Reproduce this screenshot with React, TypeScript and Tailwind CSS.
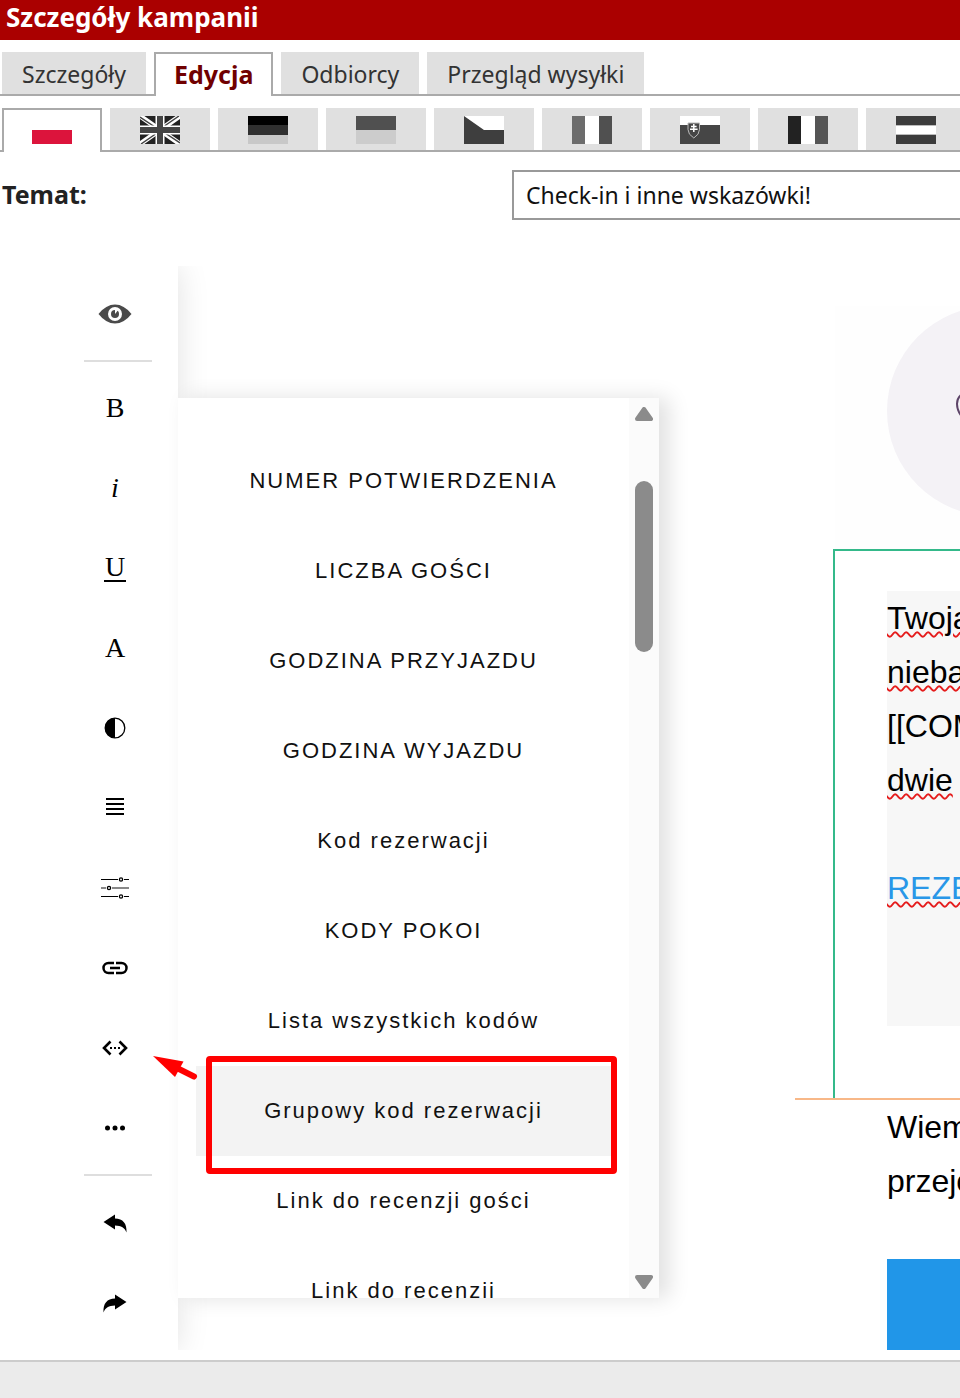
import type { ReactNode } from "react";

type Tool = {
  label: string;
  icon: ReactNode;
};

const tabs = ["Szczegóły", "Edycja", "Odbiorcy", "Przegląd wysyłki"];

const flags: Tool[] = [
  { label: "Polski", icon: <path fill="#dc143c" d="M0 14h40v14H0z" /> },
  {
    label: "English",
    icon: (
      <>
        <path fill="#222" d="M0 0h40v28H0z" />
        <path stroke="#fff" strokeWidth="5" d="M0 0l40 28M40 0L0 28" />
        <path stroke="#444" strokeWidth="1.5" d="M0 1l18 12M22 15l18 12M39 0L23 11M17 17L1 28" />
        <path stroke="#fff" strokeWidth="9" d="M20 0v28M0 14h40" />
        <path stroke="#444" strokeWidth="6" d="M20 0v28M0 14h40" />
      </>
    ),
  },
  {
    label: "Deutsch",
    icon: (
      <>
        <path d="M0 0h40v9H0z" />
        <path fill="#303030" d="M0 9h40v10H0z" />
        <path fill="#c8c8c8" d="M0 19h40v9H0z" />
      </>
    ),
  },
  {
    label: "Українська",
    icon: (
      <>
        <path fill="#505050" d="M0 0h40v14H0z" />
        <path fill="#ccc" d="M0 14h40v14H0z" />
      </>
    ),
  },
  {
    label: "Čeština",
    icon: (
      <>
        <path fill="#fff" d="M0 0h40v14H0z" />
        <path fill="#3e3e3e" d="M0 0l20 14h20v14H0z" />
      </>
    ),
  },
  {
    label: "Italiano",
    icon: (
      <>
        <path fill="#6c6c6c" d="M0 0h13v28H0z" />
        <path fill="#fff" d="M13 0h14v28H13z" />
        <path fill="#505050" d="M27 0h13v28H27z" />
      </>
    ),
  },
  {
    label: "Slovenčina",
    icon: (
      <>
        <path fill="#fff" d="M0 0h40v9H0z" />
        <path fill="#464646" d="M0 9h40v19H0z" />
        <path
          fill="#464646"
          stroke="#bbb"
          d="M8 7h11.5v6.5q0 5-5.7 8.500q-5.8-3.5-5.8-8.500z"
        />
        <path stroke="#fff" strokeWidth="1.5" d="M13.8 8v8M11 10.500h5.600M10 13.200h7.600" />
      </>
    ),
  },
  {
    label: "Français",
    icon: (
      <>
        <path fill="#222" d="M0 0h13v28H0z" />
        <path fill="#fff" d="M13 0h14v28H13z" />
        <path fill="#555" d="M27 0h13v28H27z" />
      </>
    ),
  },
  {
    label: "Nederlands",
    icon: (
      <>
        <path fill="#3c3c3c" d="M0 0h40v28H0z" />
        <path fill="#fff" stroke="#bbb" strokeWidth="1" d="M-1 9.500h42v9h-42z" />
      </>
    ),
  },
];

function Icon({ children }: { children: ReactNode }) {
  return (
    <svg width="36" height="36" viewBox="0 0 36 36" fill="none" aria-hidden="true">
      {children}
    </svg>
  );
}

const tools: Tool[] = [
  { label: "Pogrubienie", icon: "B" },
  { label: "Kursywa", icon: <i>i</i> },
  {
    label: "Podkreślenie",
    icon: <span className="border-b-2 border-black px-px leading-[26px]">U</span>,
  },
  { label: "Czcionka", icon: "A" },
  {
    label: "Kolor",
    icon: (
      <Icon>
        <circle cx="18" cy="18" r="9.8" stroke="#000" strokeWidth="1.3" />
        <path fill="#000" d="M18 8a10 10 0 0 0 0 20z" />
      </Icon>
    ),
  },
  {
    label: "Wyrównanie",
    icon: (
      <Icon>
        <path stroke="#000" strokeWidth="2" d="M9 9h18M9 14h18M9 19h18M9 24h18" />
      </Icon>
    ),
  },
  {
    label: "Ustawienia",
    icon: (
      <Icon>
        <path stroke="#000" d="M4 9.500h17M27 9.500h5M4 26.500h17M27 26.500h5" />
        <path stroke="#888" strokeWidth="2" d="M4 18h5M15 18h17" />
        <g stroke="#000" strokeWidth="1.3">
          <circle cx="24" cy="9.5" r="1.6" />
          <circle cx="12" cy="18" r="1.6" />
          <circle cx="24" cy="26.5" r="1.6" />
        </g>
      </Icon>
    ),
  },
  {
    label: "Odnośnik",
    icon: (
      <Icon>
        <path
          stroke="#000"
          strokeWidth="2.5"
          d="M17 13h-5.500a5 5 0 0 0 0 10H17M19 13h5.500a5 5 0 0 1 0 10H19M13 18h10"
        />
      </Icon>
    ),
  },
  {
    label: "Kody",
    icon: (
      <Icon>
        <path stroke="#000" strokeWidth="2.6" d="M13.500 11.500L7 18l6.500 6.500M22.500 11.500L29 18l-6.500 6.500" />
        <path fill="#000" d="M13 17h2v2h-2zM17 17h2v2h-2zM21 17h2v2h-2z" />
      </Icon>
    ),
  },
  {
    label: "Więcej",
    icon: (
      <Icon>
        <circle cx="10.5" cy="18" r="2.5" fill="#000" />
        <circle cx="18" cy="18" r="2.5" fill="#000" />
        <circle cx="25.5" cy="18" r="2.5" fill="#000" />
      </Icon>
    ),
  },
];

const history: Tool[] = [
  {
    label: "Cofnij",
    icon: (
      <Icon>
        <path fill="#000" d="M6.500 16L18 8.500v4c8 0 12 5 11.500 14c-2-5-5-6.500-11.500-7v4z" />
      </Icon>
    ),
  },
  {
    label: "Ponów",
    icon: (
      <Icon>
        <path fill="#000" d="M29.500 16L18 8.500v4c-8 0-12 5-11.500 14c2-5 5-6.500 11.500-7v4z" />
      </Icon>
    ),
  },
];

const codes = [
  "NUMER POTWIERDZENIA",
  "LICZBA GOŚCI",
  "GODZINA PRZYJAZDU",
  "GODZINA WYJAZDU",
  "Kod rezerwacji",
  "KODY POKOI",
  "Lista wszystkich kodów",
  "Grupowy kod rezerwacji",
  "Link do recenzji gości",
  "Link do recenzii",
];

const activeCode = "Grupowy kod rezerwacji";

function ToolButton({ label, icon }: Tool) {
  return (
    <button
      type="button"
      aria-label={label}
      className="flex h-20 w-full items-center justify-center font-['Liberation_Serif',serif] text-[28px] text-black"
    >
      {icon}
    </button>
  );
}

function Divider() {
  return <hr className="ml-8 w-[68px] border-t-2 border-[#dedede]" />;
}

function Misspelled({ children }: { children: ReactNode }) {
  return (
    <span className="underline decoration-[#e51c1c] decoration-wavy decoration-2 underline-offset-2">
      {children}
    </span>
  );
}

function Toolbar() {
  return (
    <aside className="w-[178px] shrink-0 bg-white pb-[6px] pl-[52px] pt-2 shadow-[0_0_30px_rgba(0,0,0,0.12)]">
      <ToolButton
        label="Podgląd"
        icon={
          <Icon>
            <path fill="#4a4a4a" d="M1.500 18Q9 8.500 18 8.500T34.500 18Q27 27.500 18 27.500T1.500 18z" />
            <circle cx="18" cy="18" r="7" fill="#fff" />
            <circle cx="18" cy="18" r="4" fill="#4a4a4a" />
            <path fill="#fff" d="M18 18v-5h4z" />
          </Icon>
        }
      />
      <div className="py-[6px]">
        <Divider />
      </div>
      {tools.map((tool) => (
        <ToolButton key={tool.label} {...tool} />
      ))}
      <div className="pb-2 pt-[6px]">
        <Divider />
      </div>
      {history.map((tool) => (
        <ToolButton key={tool.label} {...tool} />
      ))}
    </aside>
  );
}

function CodesMenu() {
  return (
    <div className="absolute left-[178px] top-[132px] flex h-[900px] w-[481px] overflow-hidden bg-white">
      <ul className="mx-[18px] flex-1 pt-[38px]">
        {codes.map((code) => (
          <li key={code}>
            <button
              type="button"
              className={`h-[90px] w-full pb-[2px] text-center font-['Liberation_Sans',sans-serif] text-[22px] tracking-[2px] text-[#111] ${
                code === activeCode ? "bg-[#f3f3f3]" : ""
              }`}
            >
              {code}
            </button>
          </li>
        ))}
      </ul>
      <div className="flex w-[30px] flex-col items-center justify-between bg-[#fbfbfb] py-[9px]">
        <svg width="18" height="14" viewBox="0 0 18 14" aria-hidden="true">
          <path fill="#8b8b8b" stroke="#8b8b8b" strokeWidth="4" strokeLinejoin="round" d="M9 2l7 10H2z" />
        </svg>
        <div className="mb-[623px] mt-[60px] w-[18px] flex-1 rounded-full bg-[#8b8b8b]" />
        <svg width="18" height="14" viewBox="0 0 18 14" aria-hidden="true">
          <path fill="#8b8b8b" stroke="#8b8b8b" strokeWidth="4" strokeLinejoin="round" d="M9 12l7-10H2z" />
        </svg>
      </div>
    </div>
  );
}

function EmailPreview() {
  return (
    <div className="min-w-0 flex-1 overflow-hidden pl-[617px] font-['Liberation_Sans',sans-serif] text-[32px] leading-[54px] text-black">
      <div className="w-[700px]">
        <div className="ml-10 mt-10 bg-[#fefefe] pl-[52px]">
          <svg width="210" height="243" viewBox="0 0 210 243" fill="none" aria-hidden="true">
            <circle cx="105" cy="105" r="105" fill="#f4f2f6" />
            <path
              stroke="#5d4468"
              strokeWidth="2"
              d="M105 136C94 124 70 115 70 98c0-15 24-18 35 0c11-18 35-15 35 0c0 17-24 26-35 38z"
            />
          </svg>
        </div>
        <div className="ml-[38px] border-l-2 border-t-2 border-[#34b98a] pb-[72px] pl-[52px] pt-10">
          <div className="whitespace-nowrap bg-[#f7f7f7] pb-[111px]">
            <p>
              <Misspelled>Twoja</Misspelled>
            </p>
            <p>
              <Misspelled>nieba</Misspelled>
            </p>
            <p>[[COM</p>
            <p className="mb-[54px]">
              <Misspelled>dwie</Misspelled>
            </p>
            <a href="#rezerwacja" className="block text-[#2997e8]">
              <Misspelled>REZE</Misspelled>
            </a>
          </div>
        </div>
        <div className="border-t-2 border-[#f8b888] pl-[92px]">
          <p>Wiem</p>
          <p className="mb-[51px]">przejo</p>
          <div className="h-[91px] bg-[#2196e8]" />
        </div>
      </div>
    </div>
  );
}

function Annotation() {
  return (
    <>
      <div className="pointer-events-none absolute left-[206px] top-[790px] h-[118px] w-[411px] rounded-[4px] border-[6px] border-[#ff0000]" />
      <svg
        width="48"
        height="28"
        viewBox="0 0 48 28"
        className="pointer-events-none absolute left-[152px] top-[788px]"
        aria-hidden="true"
      >
        <path fill="#ff0000" d="M1 2l30.500 5.500L23 23z" />
        <path stroke="#ff0000" strokeWidth="6" strokeLinecap="round" d="M25 14l17 8.500" />
      </svg>
    </>
  );
}

export default function App() {
  return (
    <div className="overflow-hidden bg-white font-['Noto_Sans',sans-serif]">
      <header className="h-10 bg-[#aa0000] px-[6px]">
        <h1 className="text-[26px] font-bold leading-[34px] text-white">Szczegóły kampanii</h1>
      </header>

      <nav className="mt-3 flex gap-2 border-b-2 border-[#aaa] px-[2px] leading-[40px]">
        {tabs.map((tab) => (
          <button
            key={tab}
            type="button"
            className={
              tab === "Edycja"
                ? "-mb-[2px] border-x-2 border-t-2 border-[#aaa] bg-white px-[18px] pb-[2px] text-[25px] font-bold text-[#700000]"
                : "bg-[#e0e0e0] px-5 pt-[2px] text-[23px] text-[#333]"
            }
          >
            {tab}
          </button>
        ))}
      </nav>

      <nav className="mt-3 flex gap-2 border-b-2 border-[#aaa] px-[2px]">
        {flags.map((flag, index) => (
          <button
            key={flag.label}
            type="button"
            aria-label={flag.label}
            className={`flex w-[100px] shrink-0 justify-center ${
              index === 0
                ? "-mb-[2px] h-11 border-x-2 border-t-2 border-[#aaa] bg-white pt-[6px]"
                : "h-[42px] bg-[#e0e0e0] pt-2"
            }`}
          >
            <svg width="40" height="28" viewBox="0 0 40 28">
              {flag.icon}
            </svg>
          </button>
        ))}
      </nav>

      <div className="mt-[18px] flex items-center pl-[2px]">
        <label htmlFor="subject" className="w-[510px] shrink-0 text-[25px] font-bold text-[#222]">
          Temat:
        </label>
        <input
          id="subject"
          type="text"
          defaultValue="Check-in i inne wskazówki!"
          className="h-[50px] w-[600px] shrink-0 border-2 border-[#999] bg-white px-3 text-[23px] text-[#111]"
        />
      </div>

      <main className="relative mt-[46px] flex overflow-hidden">
        <Toolbar />
        <EmailPreview />
        <div className="absolute left-[178px] top-[132px] h-[900px] w-[481px] shadow-[10px_0_20px_rgba(0,0,0,0.12)]" />
        <CodesMenu />
        <Annotation />
      </main>

      <footer className="mt-[10px] h-[38px] border-t-2 border-[#ccc] bg-[#ebebeb]" />
    </div>
  );
}
